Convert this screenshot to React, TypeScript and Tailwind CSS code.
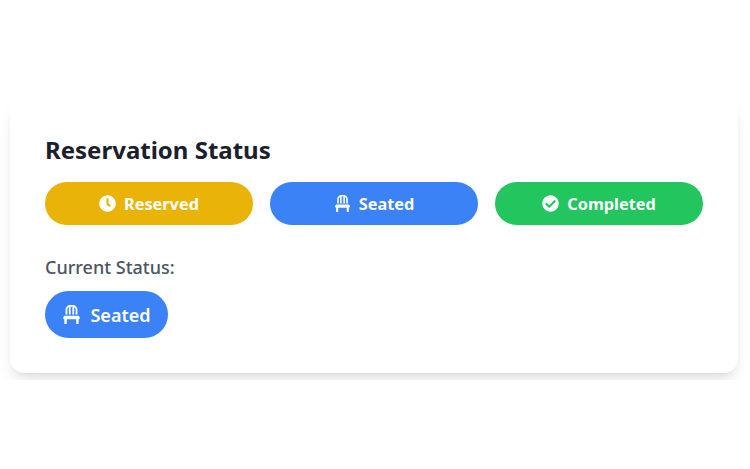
import { FaCheckCircle, FaChair, FaClock } from 'react-icons/fa';

const statuses = [
  { label: 'Reserved', color: 'bg-[#eab308]', icon: FaClock },
  { label: 'Seated', color: 'bg-[#3b82f6]', icon: FaChair },
  { label: 'Completed', color: 'bg-[#22c55e]', icon: FaCheckCircle },
];

export default function App() {
  return (
    <div className="h-[469px] w-[750px] bg-white font-['Noto_Sans',sans-serif]">
      <div className="h-[380px] overflow-hidden px-[10px] pt-[98px]">
        <div className="h-[275px] w-[728px] rounded-[14px] bg-white px-[35px] pt-[34px] shadow-lg">
          <h2 className="text-[24px] leading-[36px] font-bold text-[#1a202c]">Reservation Status</h2>
          <div className="mt-[14px] flex gap-[17px]">
            {statuses.map((status) => (
              <button
                key={status.label}
                className={`flex h-[43px] w-[208px] items-center justify-center gap-[8px] rounded-full text-[16.3px] font-bold text-white ${status.color}`}
              >
                <status.icon className="h-[17px] w-[17px]" />
                <span className="pt-[2px]">{status.label}</span>
              </button>
            ))}
          </div>
          <p className="mt-[29px] text-[18px] leading-[26px] font-medium text-[#4b5563]">Current Status:</p>
          <div className="mt-[11px] flex h-[47px] w-[123px] items-center justify-center gap-[9px] rounded-full bg-[#3b82f6] text-[18px] font-semibold text-white">
            <FaChair className="h-[19px] w-[19px]" />
            <span className="pt-[2px]">Seated</span>
          </div>
        </div>
      </div>
    </div>
  );
}
